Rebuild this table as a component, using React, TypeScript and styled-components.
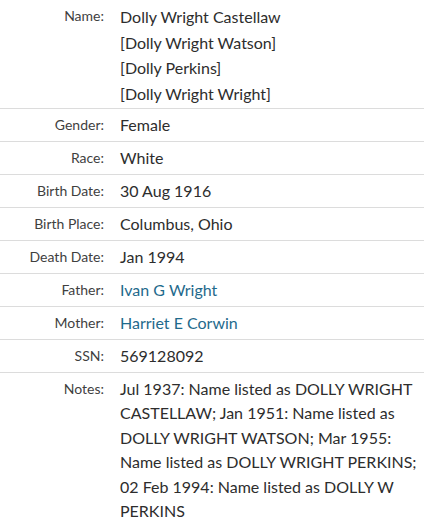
import React from "react";
import styled, { createGlobalStyle } from "styled-components";

const Global = createGlobalStyle`
  body { margin: 0; background: #fff; font-family: Lato, "Noto Sans", sans-serif; }
`;

const Table = styled.div`
  width: 424px;
  display: flex;
  flex-direction: column;
`;

const Row = styled.div<{ $last?: boolean }>`
  display: grid;
  grid-template-columns: 104px 1fr;
  column-gap: 16px;
  padding: 4px 0 ${(p) => (p.$last ? "0" : "4px")};
  border-bottom: ${(p) => (p.$last ? "none" : "1px solid #dcdcdc")};
`;

const Label = styled.div`
  text-align: right;
  font-size: 14px;
  line-height: 24px;
  color: #3f3f3f;
`;

const Value = styled.div<{ $lh?: number }>`
  font-size: 16px;
  line-height: ${(p) => p.$lh ?? 24}px;
  color: #2d2d2d;
`;

const NameLine = styled.div`
  line-height: 25.5px;
`;

const Link = styled.a`
  color: #1f6a8c;
  text-decoration: none;
`;

const NameRow = styled(Row)`
  padding-bottom: 2px;
`;

const rows: { label: string; value: React.ReactNode }[] = [
  { label: "Gender:", value: "Female" },
  { label: "Race:", value: "White" },
  { label: "Birth Date:", value: "30 Aug 1916" },
  { label: "Birth Place:", value: "Columbus, Ohio" },
  { label: "Death Date:", value: "Jan 1994" },
  { label: "Father:", value: <Link href="#">Ivan G Wright</Link> },
  { label: "Mother:", value: <Link href="#">Harriet E Corwin</Link> },
  { label: "SSN:", value: "569128092" },
];

export default function App() {
  return (
    <>
      <Global />
      <Table>
        <NameRow>
          <Label>Name:</Label>
          <Value>
            <NameLine>Dolly Wright Castellaw</NameLine>
            <NameLine>[Dolly Wright Watson]</NameLine>
            <NameLine>[Dolly Perkins]</NameLine>
            <NameLine>[Dolly Wright Wright]</NameLine>
          </Value>
        </NameRow>
        {rows.map((r) => (
          <Row key={r.label}>
            <Label>{r.label}</Label>
            <Value>{r.value}</Value>
          </Row>
        ))}
        <Row $last>
          <Label>Notes:</Label>
          <Value $lh={24.4}>
            Jul 1937: Name listed as DOLLY WRIGHT CASTELLAW; Jan 1951: Name listed as DOLLY WRIGHT
            WATSON; Mar 1955: Name listed as DOLLY WRIGHT PERKINS; 02 Feb 1994: Name listed as
            DOLLY W PERKINS
          </Value>
        </Row>
      </Table>
    </>
  );
}
